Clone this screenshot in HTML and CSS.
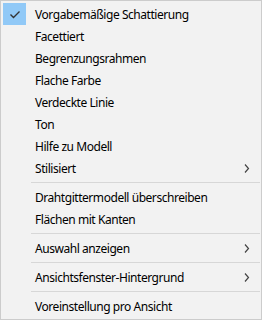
FILE: index.html
```html
<!DOCTYPE html>
<html lang="de">
<head>
  <meta charset="UTF-8">
  <title>Ansicht</title>
  <link rel="stylesheet" href="styles.css">
</head>
<body>
  <div class="menu">
    <div class="item checked">
      <span class="check">
        <svg width="23" height="22" viewBox="0 0 23 22"><polyline points="7.5,11.5 10.5,14.5 16.5,8.5" fill="none" stroke="#333" stroke-width="1.4"/></svg>
      </span>
      <span class="label">Vorgabemäßige Schattierung</span>
    </div>
    <div class="item"><span class="check"></span><span class="label">Facettiert</span></div>
    <div class="item"><span class="check"></span><span class="label">Begrenzungsrahmen</span></div>
    <div class="item"><span class="check"></span><span class="label">Flache Farbe</span></div>
    <div class="item"><span class="check"></span><span class="label">Verdeckte Linie</span></div>
    <div class="item"><span class="check"></span><span class="label">Ton</span></div>
    <div class="item"><span class="check"></span><span class="label">Hilfe zu Modell</span></div>
    <div class="item">
      <span class="check"></span><span class="label">Stilisiert</span>
      <svg class="arrow" width="6" height="9" viewBox="0 0 6 9"><polyline points="1,0.5 4.5,4.5 1,8.5" fill="none" stroke="#444" stroke-width="1.2"/></svg>
    </div>
    <div class="sep"></div>
    <div class="item"><span class="check"></span><span class="label">Drahtgittermodell überschreiben</span></div>
    <div class="item"><span class="check"></span><span class="label">Flächen mit Kanten</span></div>
    <div class="sep"></div>
    <div class="item">
      <span class="check"></span><span class="label">Auswahl anzeigen</span>
      <svg class="arrow" width="6" height="9" viewBox="0 0 6 9"><polyline points="1,0.5 4.5,4.5 1,8.5" fill="none" stroke="#444" stroke-width="1.2"/></svg>
    </div>
    <div class="sep"></div>
    <div class="item">
      <span class="check"></span><span class="label">Ansichtsfenster-Hintergrund</span>
      <svg class="arrow" width="6" height="9" viewBox="0 0 6 9"><polyline points="1,0.5 4.5,4.5 1,8.5" fill="none" stroke="#444" stroke-width="1.2"/></svg>
    </div>
    <div class="sep"></div>
    <div class="item"><span class="check"></span><span class="label">Voreinstellung pro Ansicht</span></div>
  </div>
</body>
</html>
```

FILE: styles.css
```css
body {
  margin: 0;
  background-color: #ffffff;
  font-family: 'Noto Sans', 'Open Sans', sans-serif;
  font-size: 12px;
  letter-spacing: -0.45px;
  color: #000;
}

.menu {
  width: 262px;
  height: 320px;
  box-sizing: border-box;
  border: 1px solid #cccccc;
  background-color: #f2f2f2;
  padding: 2px;
}

.item {
  display: flex;
  align-items: center;
  height: 22px;
}

.check {
  width: 23px;
  height: 22px;
  flex: none;
  display: flex;
}

.checked .check {
  background-color: #91c9f7;
}

.label {
  margin-left: 9px;
  flex: 1;
  white-space: nowrap;
}

.arrow {
  margin-right: 9px;
  flex: none;
}

.sep {
  height: 1px;
  background-color: #d7d7d7;
  margin: 3px -1px 3px 28px;
}
```
